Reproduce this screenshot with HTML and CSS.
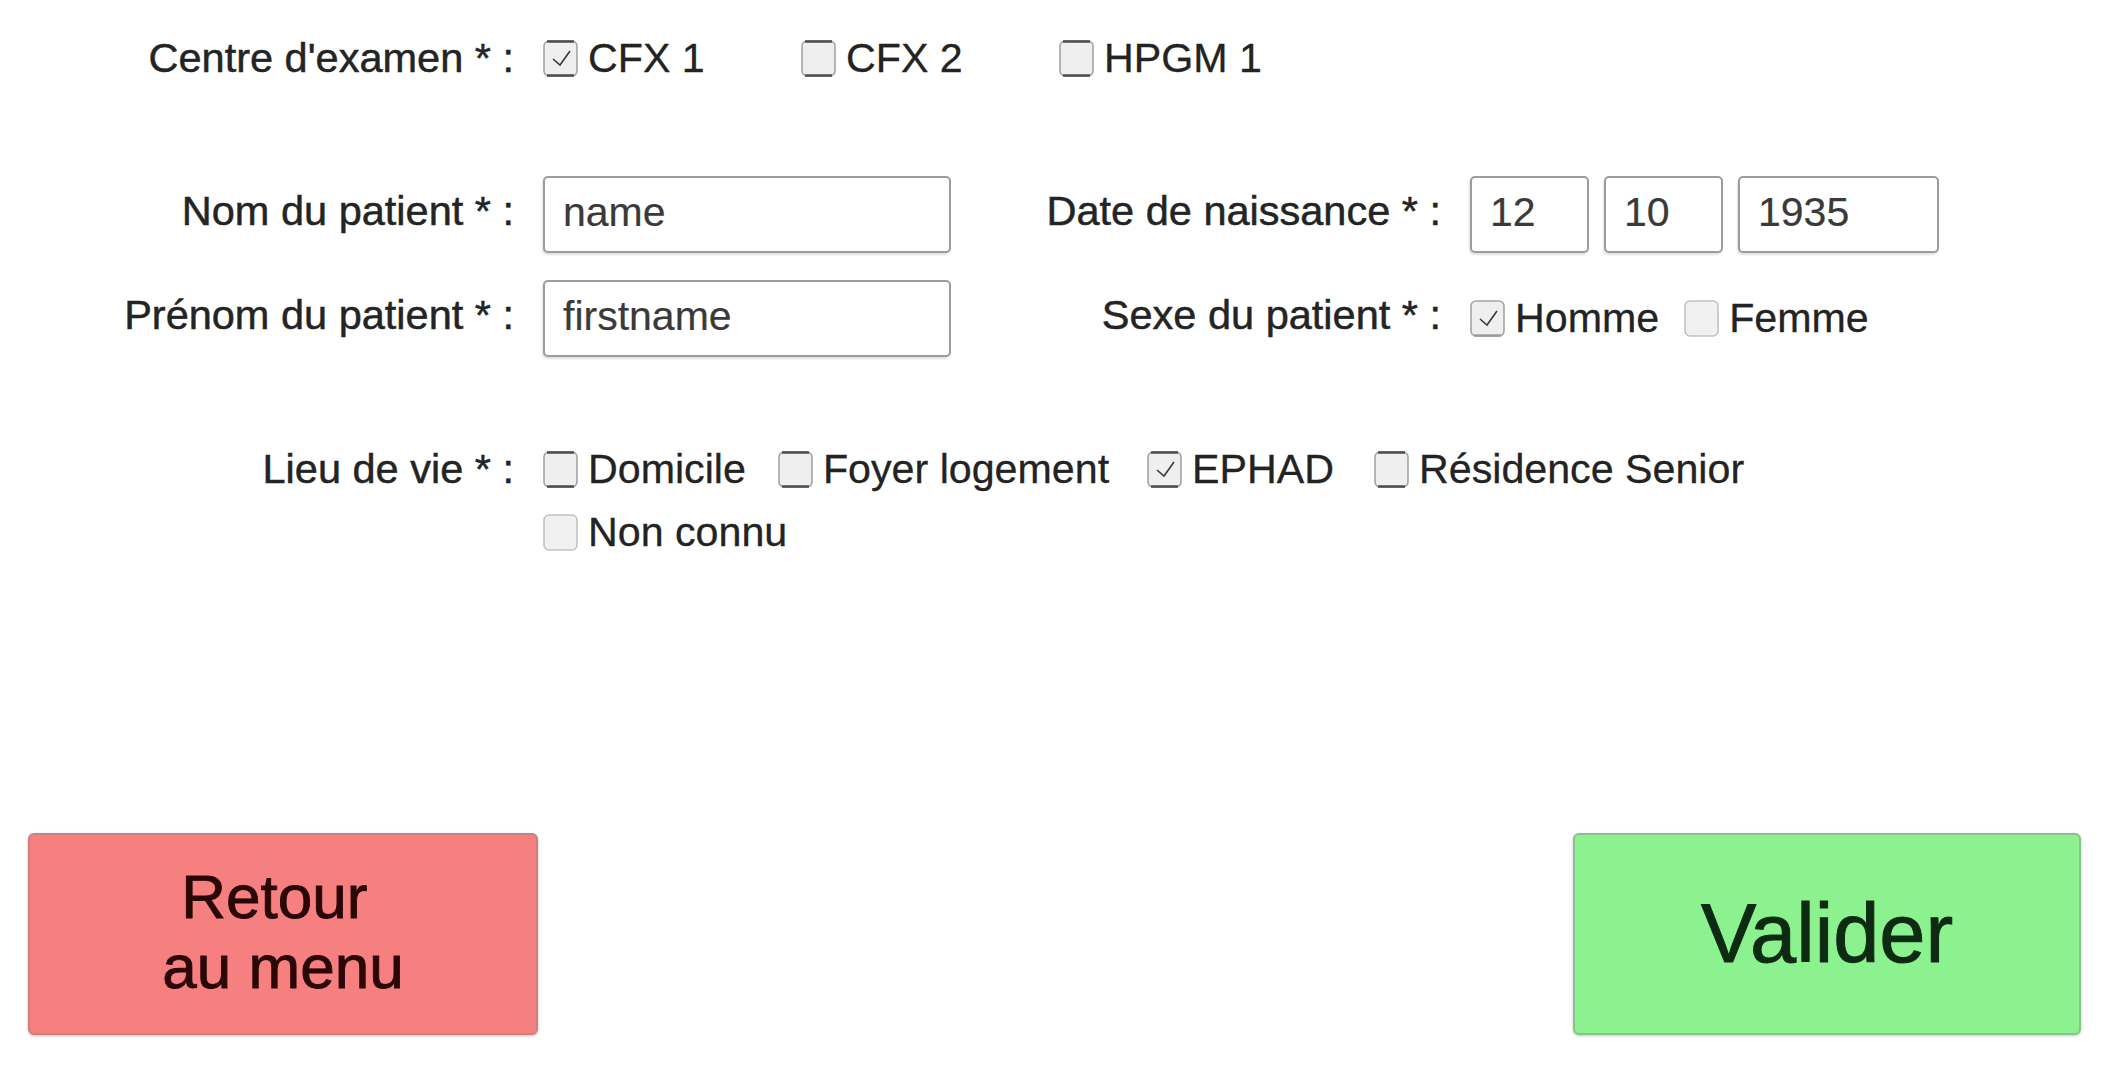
FILE: index.html
```html
<!DOCTYPE html>
<html lang="fr">
<head>
<meta charset="utf-8">
<title>Patient</title>
<link rel="stylesheet" href="styles.css">
</head>
<body>
<div class="page">
  <div class="form">
    <div class="row row-centre">
      <span class="lbl">Centre d'examen * :</span>
      <div class="opts">
        <span class="tog tog-cell"><svg class="box" viewBox="0 0 35 37"><rect class="bg" x="1" y="1" width="33" height="35" rx="5"/><path class="edge" d="M4 1.5 H31 M4 35.5 H31"/><path class="chk" d="M10 19 L17 25 L27 11"/></svg><span class="tx">CFX 1</span></span>
        <span class="tog tog-cell"><svg class="box" viewBox="0 0 35 37"><rect class="bg" x="1" y="1" width="33" height="35" rx="5"/><path class="edge" d="M4 1.5 H31 M4 35.5 H31"/></svg><span class="tx">CFX 2</span></span>
        <span class="tog tog-cell"><svg class="box" viewBox="0 0 35 37"><rect class="bg" x="1" y="1" width="33" height="35" rx="5"/><path class="edge" d="M4 1.5 H31 M4 35.5 H31"/></svg><span class="tx">HPGM 1</span></span>
      </div>
    </div>

    <div class="row row-field row-nom">
      <span class="lbl">Nom du patient * :</span>
      <input class="field field-name" type="text" value="name">
      <span class="lbl lbl-right">Date de naissance * :</span>
      <div class="date">
        <input class="field f-day" type="text" value="12">
        <input class="field f-month" type="text" value="10">
        <input class="field f-year" type="text" value="1935">
      </div>
    </div>

    <div class="row row-field row-prenom">
      <span class="lbl">Prénom du patient * :</span>
      <input class="field field-name" type="text" value="firstname">
      <span class="lbl lbl-right">Sexe du patient * :</span>
      <div class="opts sexe">
        <span class="tog"><svg class="box" viewBox="0 0 35 37"><rect class="bg" x="1" y="1" width="33" height="35" rx="5"/><path class="edge light" d="M4 35.5 H31"/><path class="chk" d="M10 19 L17 25 L27 11"/></svg><span class="tx">Homme</span></span>
        <span class="tog"><svg class="box light" viewBox="0 0 35 37"><rect class="bg" x="1" y="1" width="33" height="35" rx="5"/></svg><span class="tx">Femme</span></span>
      </div>
    </div>

    <div class="row row-lieu">
      <span class="lbl">Lieu de vie * :</span>
      <div class="opts wrap">
        <span class="tog gap-a"><svg class="box" viewBox="0 0 35 37"><rect class="bg" x="1" y="1" width="33" height="35" rx="5"/><path class="edge" d="M4 1.5 H31 M4 35.5 H31"/></svg><span class="tx">Domicile</span></span>
        <span class="tog gap-b"><svg class="box" viewBox="0 0 35 37"><rect class="bg" x="1" y="1" width="33" height="35" rx="5"/><path class="edge" d="M4 1.5 H31 M4 35.5 H31"/></svg><span class="tx">Foyer logement</span></span>
        <span class="tog gap-c"><svg class="box" viewBox="0 0 35 37"><rect class="bg" x="1" y="1" width="33" height="35" rx="5"/><path class="edge" d="M4 1.5 H31 M4 35.5 H31"/><path class="chk" d="M10 19 L17 25 L27 11"/></svg><span class="tx">EPHAD</span></span>
        <span class="tog gap-d"><svg class="box" viewBox="0 0 35 37"><rect class="bg" x="1" y="1" width="33" height="35" rx="5"/><path class="edge" d="M4 1.5 H31 M4 35.5 H31"/></svg><span class="tx">Résidence Senior</span></span>
        <span class="tog"><svg class="box light" viewBox="0 0 35 37"><rect class="bg" x="1" y="1" width="33" height="35" rx="5"/></svg><span class="tx">Non connu</span></span>
      </div>
    </div>
  </div>

  <div class="actions">
    <button class="btn btn-back" type="button"><span>Retour&nbsp;<br>au menu</span></button>
    <button class="btn btn-ok" type="button">Valider</button>
  </div>
</div>
</body>
</html>
```

FILE: styles.css
```css
* {
  box-sizing: border-box;
}

html, body {
  margin: 0;
  padding: 0;
  background: #ffffff;
}

body {
  font-family: "Liberation Sans", Arial, sans-serif;
  color: #222222;
}

.page {
  width: 2104px;
  height: 1070px;
  display: flex;
  flex-direction: column;
  overflow: hidden;
}

.form {
  display: flex;
  flex-direction: column;
}

.row {
  display: flex;
  align-items: center;
}

.lbl {
  flex: none;
  width: 514px;
  margin-right: 29px;
  text-align: right;
  font-size: 41.5px;
  line-height: 44px;
  color: #242424;
  -webkit-text-stroke: 0.5px #242424;
  white-space: nowrap;
}

.lbl-right {
  width: 490px;
}

.row-centre {
  margin-top: 38px;
  height: 40px;
}

.row-nom {
  margin-top: 98px;
}

.row-prenom {
  margin-top: 27px;
}

.row-field .lbl {
  position: relative;
  top: -4px;
}

.row-lieu {
  margin-top: 90px;
  align-items: flex-start;
}

.opts {
  display: flex;
  align-items: center;
}

.opts.wrap {
  flex-wrap: wrap;
  width: 1400px;
  row-gap: 19px;
}

.tog {
  display: inline-flex;
  align-items: center;
  height: 44px;
  font-size: 41.2px;
  color: #232323;
  -webkit-text-stroke: 0.3px #232323;
  white-space: nowrap;
}

.tog-cell {
  width: 258px;
}

.gap-a {
  margin-right: 32px;
}

.gap-b {
  margin-right: 38px;
}

.gap-c {
  margin-right: 40px;
}

.gap-d {
  margin-right: 40px;
}

.sexe .tog {
  margin-right: 25px;
}

.box {
  flex: none;
  width: 35px;
  height: 37px;
  margin-right: 10px;
}

.box .bg {
  fill: #efefef;
  stroke: #a4a4a4;
  stroke-width: 1.6;
}

.box .edge {
  fill: none;
  stroke: #4e4e4e;
  stroke-width: 2.4;
}

.box .edge.light {
  stroke: #9a9a9a;
}

.box.light .bg {
  fill: #f1f1f1;
  stroke: #c2c2c2;
}

.box .chk {
  fill: none;
  stroke: #3a3a3a;
  stroke-width: 1.6;
}

.field {
  flex: none;
  height: 77px;
  border: 2px solid #9c9c9c;
  border-radius: 5px;
  background: #ffffff;
  box-shadow: -1px 2px 2px rgba(0, 0, 0, 0.12);
  padding: 0 0 4px 18px;
  font-family: "Liberation Sans", Arial, sans-serif;
  font-size: 41px;
  color: #3a3a3a;
  -webkit-text-stroke: 0.2px #3a3a3a;
  outline: none;
  margin: 0;
}

.field-name {
  width: 408px;
}

.date {
  display: flex;
  gap: 15px;
}

.f-day {
  width: 119px;
}

.f-month {
  width: 119px;
}

.f-year {
  width: 201px;
}

.actions {
  margin-top: auto;
  margin-bottom: 35px;
  padding: 0 23px 0 28px;
  display: flex;
  justify-content: space-between;
}

.btn {
  width: 510px;
  height: 202px;
  border-radius: 6px;
  font-family: "Liberation Sans", Arial, sans-serif;
  cursor: pointer;
  padding: 0;
  display: flex;
  align-items: center;
  justify-content: center;
  text-align: center;
}

.btn-back {
  background: #f6807f;
  border: 2px solid #c98181;
  box-shadow: 0 1px 3px rgba(120, 60, 60, 0.35);
  color: #2a0606;
  -webkit-text-stroke: 0.9px #2a0606;
  font-size: 62px;
  line-height: 70px;
}

.btn-back span {
  position: relative;
  top: -2px;
}

.btn-ok {
  width: 508px;
  background: #8bf28f;
  border: 2px solid #8cc08e;
  box-shadow: 0 1px 3px rgba(60, 120, 60, 0.35);
  color: #0f2a12;
  -webkit-text-stroke: 1px #0f2a12;
  font-size: 83px;
  line-height: 90px;
}
```
